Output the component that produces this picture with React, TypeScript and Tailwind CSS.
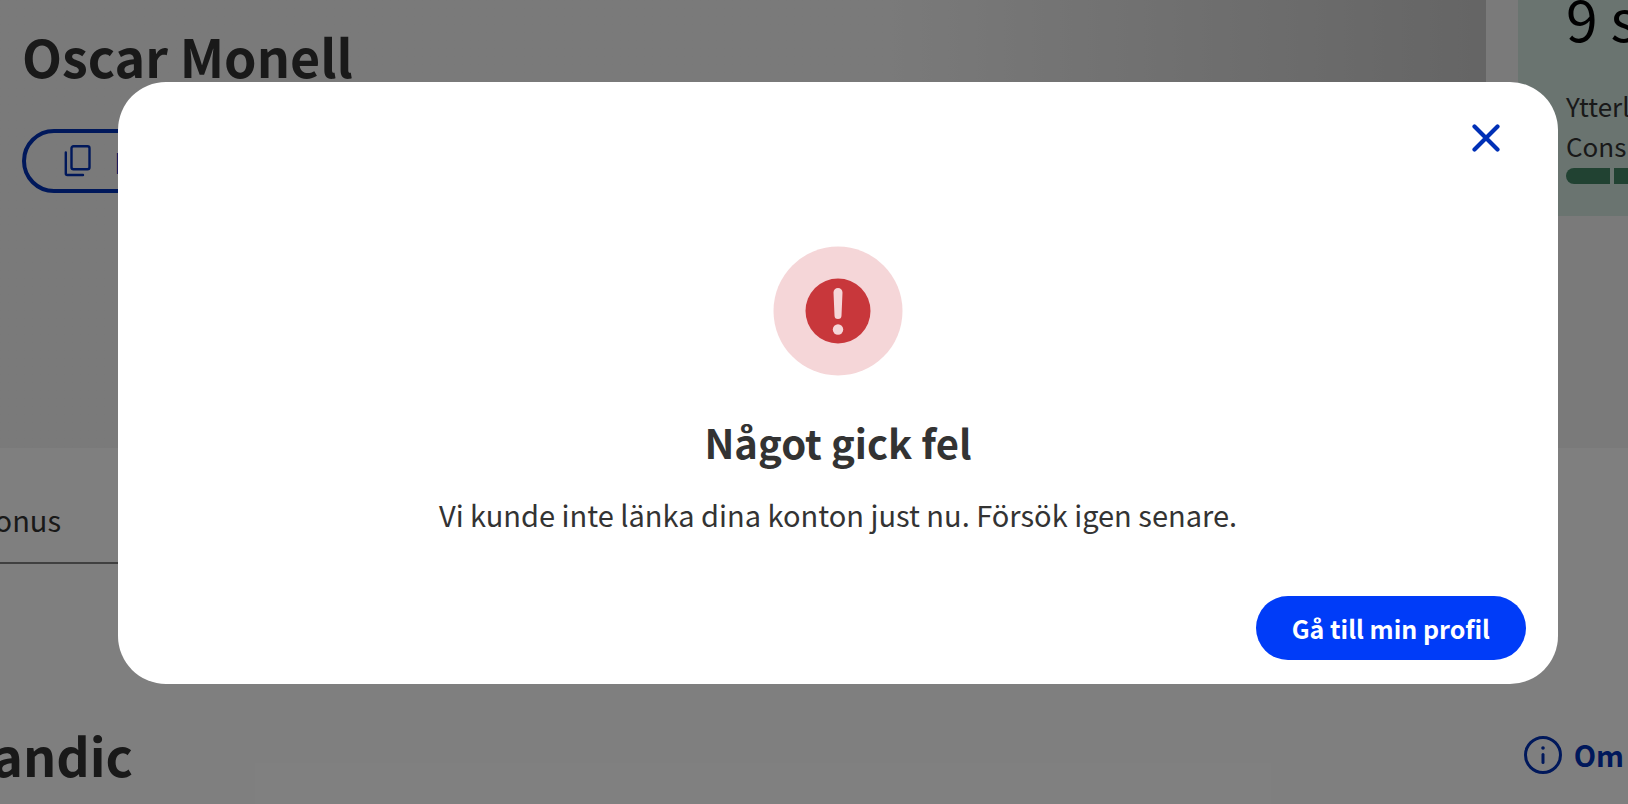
import type { ReactNode } from "react";

// ─── Icons ────────────────────────────────────────────────────────────────────

function CopyIcon() {
  return (
    <svg width="28" height="32" viewBox="0 0 28 32" fill="none" stroke="currentColor" strokeWidth="2.400" aria-hidden="true">
      <rect x="7.500" y="1.200" width="18" height="23" rx="2" />
      <path d="M1.800 7.500v21a1.500 1.500 0 0 0 1.500 1.500H19" strokeLinecap="round" />
    </svg>
  );
}

function CloseIcon() {
  return (
    <svg width="28" height="28" viewBox="0 0 28 28" fill="none" stroke="currentColor" strokeWidth="4.200" strokeLinecap="round" aria-hidden="true">
      <path d="M2.500 2.500 25.500 25.500M25.500 2.500 2.500 25.500" />
    </svg>
  );
}

function InfoIcon() {
  return (
    <svg width="38" height="38" viewBox="0 0 38 38" fill="none" stroke="currentColor" aria-hidden="true">
      <circle cx="19" cy="19" r="17.500" strokeWidth="3" />
      <path d="M19 18.500v8" strokeWidth="3" strokeLinecap="round" />
      <circle cx="19" cy="12" r="1.800" fill="currentColor" stroke="none" />
    </svg>
  );
}

function ErrorIcon() {
  return (
    <svg width="130" height="130" viewBox="0 0 130 130" aria-hidden="true">
      <circle cx="65" cy="65" r="64.500" fill="#f5d6d8" />
      <circle cx="65" cy="65" r="32.500" fill="#c8373b" />
      <path d="M60.500 46.500a4.500 4.500 0 0 1 9 0l-1 23a3.500 3.500 0 0 1-7 0z" fill="#f5d6d8" />
      <circle cx="65" cy="83.500" r="5.200" fill="#f5d6d8" />
    </svg>
  );
}

// ─── Page behind the dialog ───────────────────────────────────────────────────

function Profile() {
  return (
    <section className="flex h-[448px] items-start bg-[#f4f4f4]">
      <div className="min-w-0 flex-1 self-stretch bg-linear-to-r from-[#f4f4f4] from-60% to-[#cacaca] pt-6 pl-[22px]">
        <h1 className="text-[52px] leading-[64px] font-bold">Oscar Monell</h1>
        <button className="mt-[41px] flex h-16 items-center gap-[22px] rounded-full border-4 border-[#0030b6] px-[38px] text-[29px] leading-none text-[#0030b6]">
          <CopyIcon />
          Kopiera
        </button>
      </div>
      <aside className="ml-8 h-[216px] w-[110px] shrink-0 overflow-hidden bg-[#d4e8e0] pl-12 whitespace-nowrap">
        <p className="-mt-4 text-[57px] leading-[66px] text-black">9 s</p>
        <p className="mt-9 mb-[2px] text-[26px] leading-10">
          Ytterl
          <br />
          Cons
        </p>
        <div className="flex gap-1">
          <span className="h-4 w-11 rounded-l-full bg-[#428465]" />
          <span className="h-4 flex-1 bg-[#428465]" />
        </div>
      </aside>
    </section>
  );
}

function Partner() {
  return (
    <>
      <nav className="mr-[110px] flex h-[116px] items-center border-b-2 border-[#808080] pt-7 text-[29px] leading-10">
        <a href="#bonus" className="flex w-[61px] justify-end overflow-hidden">
          Bonus
        </a>
      </nav>
      <section className="flex items-center justify-between pt-[152px] pr-1">
        <h2 className="flex w-[133px] justify-end overflow-hidden text-[52px] leading-[78px] font-bold">Scandic</h2>
        <a href="#om" className="flex items-center gap-3 text-[29px] font-bold text-[#0030b6]">
          <InfoIcon />
          Om
        </a>
      </section>
    </>
  );
}

// ─── Dialog ───────────────────────────────────────────────────────────────────

function Dialog({ title, children }: { title: string; children: ReactNode }) {
  return (
    <div className="absolute inset-0 bg-black/50 pt-[82px] pr-[70px] pl-[118px]">
      <div
        role="dialog"
        aria-modal="true"
        aria-labelledby="dialog-title"
        className="flex flex-col items-center rounded-[48px] bg-white px-8 pb-6"
      >
        <button aria-label="Stäng" className="mt-[42px] mr-[26px] self-end text-[#0030b6]">
          <CloseIcon />
        </button>
        <div className="mt-[94px]">
          <ErrorIcon />
        </div>
        <h2 id="dialog-title" className="mt-[38px] text-[40px] leading-[56px] font-bold">
          {title}
        </h2>
        <p className="mt-5 text-[29px] leading-12">{children}</p>
        <button className="mt-[58px] h-16 self-end rounded-full bg-[#003cf8] px-9 text-[25px] leading-none font-bold text-white">
          Gå till min profil
        </button>
      </div>
    </div>
  );
}

export default function App() {
  return (
    <div className="relative min-h-screen overflow-hidden bg-white font-['Noto_Sans_CJK_SC',sans-serif] text-[#333333]">
      <Profile />
      <Partner />
      <Dialog title="Något gick fel">Vi kunde inte länka dina konton just nu. Försök igen senare.</Dialog>
    </div>
  );
}
